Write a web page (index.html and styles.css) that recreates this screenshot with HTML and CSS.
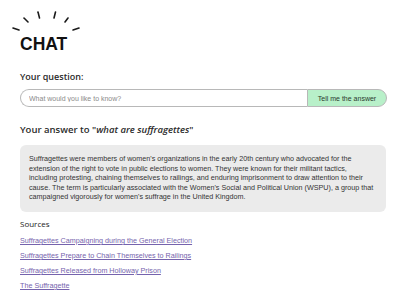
FILE: index.html
```html
<!DOCTYPE html>
<html>
<head>
<meta charset="utf-8">
<link rel="stylesheet" href="styles.css">
</head>
<body>
<div class="page">
  <header class="logo">
    <svg class="rays" width="72" height="22" viewBox="0 0 72 22">
      <g stroke="#1a1a1a" stroke-width="1.6" stroke-linecap="round" fill="none">
        <line x1="1" y1="17" x2="7" y2="19"/>
        <line x1="12" y1="7" x2="16" y2="11"/>
        <line x1="26" y1="1" x2="27.5" y2="7"/>
        <line x1="43.5" y1="1" x2="42" y2="7"/>
        <line x1="56" y1="7" x2="53" y2="11"/>
        <line x1="67" y1="17" x2="61" y2="19"/>
      </g>
    </svg>
    <h1 class="title">CHAT</h1>
  </header>

  <section class="question">
    <h2 class="label">Your question:</h2>
    <form class="ask">
      <input class="ask-input" type="text" placeholder="What would you like to know?">
      <button class="ask-btn" type="button">Tell me the answer</button>
    </form>
  </section>

  <section class="answer">
    <h2 class="label answer-title">Your answer to "<em>what are suffragettes</em>"</h2>
    <div class="answer-box">
      <p>Suffragettes were members of women's organizations in the early 20th century who advocated for the extension of the right to vote in public elections to women. They were known for their militant tactics, including protesting, chaining themselves to railings, and enduring imprisonment to draw attention to their cause. The term is particularly associated with the Women's Social and Political Union (WSPU), a group that campaigned vigorously for women's suffrage in the United Kingdom.</p>
    </div>
  </section>

  <section class="sources">
    <h3 class="sources-title">Sources</h3>
    <ul class="source-list">
      <li><a href="#">Suffragettes Campaigning during the General Election</a></li>
      <li><a href="#">Suffragettes Prepare to Chain Themselves to Railings</a></li>
      <li><a href="#">Suffragettes Released from Holloway Prison</a></li>
      <li><a href="#">The Suffragette</a></li>
    </ul>
  </section>
</div>
</body>
</html>
```

FILE: styles.css
```css
* { box-sizing: border-box; }
html, body { margin: 0; padding: 0; background: #fff; }
body {
  font-family: "Open Sans", "Liberation Sans", sans-serif;
  color: #222;
  overflow: hidden;
}
.page {
  padding: 11px 14px 0 20px;
  width: 400px;
}
.logo {
  display: flex;
  flex-direction: column;
  align-items: flex-start;
}
.rays {
  display: block;
  margin-left: -8px;
}
.title {
  margin: 2px 0 0 0;
  font-family: "Liberation Sans", sans-serif;
  font-weight: 700;
  font-size: 17.5px;
  line-height: 18px;
  color: #111;
}
.label {
  margin: 0;
  font-size: 9px;
  font-weight: 600;
  color: #2a2a2a;
  line-height: 12px;
}
.question { margin-top: 18px; }
.ask {
  margin: 6px 0 0 0;
  display: flex;
  width: 367px;
  height: 18px;
}
.ask-input {
  flex: 1;
  min-width: 0;
  height: 18px;
  border: 1px solid #b8b8b8;
  border-right: none;
  border-radius: 9px 0 0 9px;
  padding: 0 8px;
  font-family: "Liberation Sans", sans-serif;
  font-size: 7px;
  color: #333;
  outline: none;
}
.ask-input::placeholder { color: #8a8a8a; }
.ask-btn {
  width: 80px;
  height: 18px;
  border: 1px solid #b8b8b8;
  border-radius: 0 9px 9px 0;
  background: #b8f0c9;
  font-family: "Liberation Sans", sans-serif;
  font-size: 7px;
  color: #2a3a2e;
  padding: 0;
}
.answer { margin-top: 17px; }
.answer-title { font-size: 9.5px; }
.answer-title em { font-style: italic; font-weight: 600; }
.answer-box {
  margin-top: 9px;
  width: 366px;
  background: #ebebeb;
  border-radius: 6px;
  padding: 9px 12px 10px 9px;
}
.answer-box p {
  margin: 0;
  font-family: "Liberation Sans", sans-serif;
  font-size: 7.2px;
  line-height: 9.6px;
  color: #333;
}
.sources { margin-top: 6px; }
.sources-title {
  margin: 0;
  font-size: 8px;
  font-weight: 500;
  color: #222;
  line-height: 11px;
}
.source-list {
  list-style: none;
  margin: 3px 0 0 0;
  padding: 0;
}
.source-list li {
  height: 15px;
  line-height: 11px;
}
.source-list a {
  font-family: "Liberation Sans", sans-serif;
  font-size: 7.2px;
  color: #7563ad;
  text-decoration: underline;
}
```
